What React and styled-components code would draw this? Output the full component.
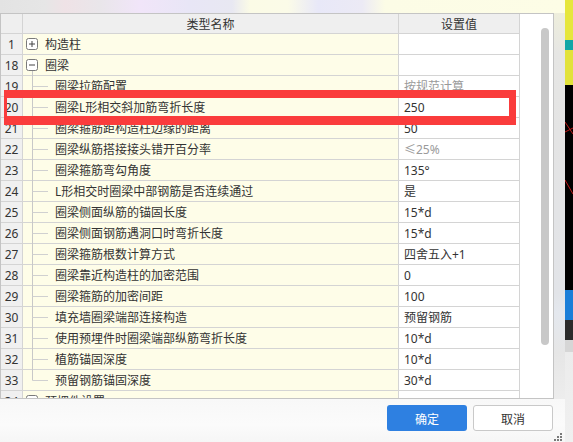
import React from "react";
import styled, { createGlobalStyle } from "styled-components";

const GlobalStyle = createGlobalStyle`
  html, body { margin: 0; padding: 0; }
  body {
    width: 573px;
    height: 442px;
    overflow: hidden;
    font-family: "Noto Sans", "Noto Sans CJK SC", sans-serif;
    color: #333;
  }
`;

const Page = styled.div`
  display: flex;
  width: 573px;
  height: 442px;
`;

const Dialog = styled.div`
  position: relative;
  width: 565px;
  display: flex;
  flex-direction: column;
  background: #fafafa;
`;

const TopBand = styled.div`
  height: 13px;
  background: linear-gradient(
    to right,
    #e3e3e3 0px,
    #e6e6e6 45px,
    #efe2e6 65px,
    #e9e6ea 100px,
    #f1e5f9 140px,
    #e8e6f6 190px,
    #e8e8f2 232px,
    #fbfbe6 250px,
    #fbfbe8 288px,
    #e8e8f8 318px,
    #eceaf5 362px,
    #fcfce6 385px,
    #fdfde6 565px
  );
`;

const Middle = styled.div`
  display: flex;
`;

const Gutter = styled.div`
  flex: 1;
  background: linear-gradient(
    to bottom,
    #eeeedc 0px,
    #e6e6e4 40px,
    #e4e4e4 120px,
    #e2e4e8 280px,
    #e4e8ee 300px,
    #e6e6e6 340px,
    #ededed 386px
  );
`;

const TableBox = styled.div`
  width: 554px;
  box-sizing: border-box;
  border: 1px solid #c4c4c4;
  display: flex;
  background: #fff;
  font-size: 12px;
`;

const Grid = styled.div`
  width: 519px;
  display: flex;
  flex-direction: column;
`;

const HeaderRow = styled.div`
  display: grid;
  grid-template-columns: 22px 376px 121px;
  height: 20px;
`;

const HeadCell = styled.div`
  box-sizing: border-box;
  background: #efefef;
  border-right: 1px solid #d4d4d4;
  border-bottom: 1px solid #d4d4d4;
  display: flex;
  align-items: center;
  justify-content: center;
  color: #333;
`;

const Body = styled.div`
  height: 364px;
  overflow: hidden;
`;

const Row = styled.div`
  display: grid;
  grid-template-columns: 22px 376px 121px;
  height: 21px;
`;

const NumCell = styled.div`
  box-sizing: border-box;
  background: #f0f0f0;
  border-right: 1px solid #d4d4d4;
  border-bottom: 1px solid #d4d4d4;
  display: flex;
  align-items: center;
  justify-content: center;
  color: #333;
`;

const NameCell = styled.div`
  box-sizing: border-box;
  background: #fefde8;
  border-right: 1px solid #d4d4d4;
  border-bottom: 1px solid #d4d4d4;
  display: flex;
  align-items: center;
  padding-left: 3px;
  gap: ${(p) => (p.$parent ? "7px" : "5px")};
  white-space: nowrap;
`;

const ValueCell = styled.div`
  box-sizing: border-box;
  background: #fff;
  border-right: 1px solid #d4d4d4;
  border-bottom: 1px solid #d4d4d4;
  display: flex;
  align-items: center;
  padding-left: 5px;
  color: ${(p) => (p.$muted ? "#9a9a9a" : "#333")};
  white-space: nowrap;
`;

const Track = styled.div`
  width: 33px;
  box-sizing: border-box;
  padding: 14px 0 0 21px;
  background: #fff;
`;

const Thumb = styled.div`
  width: 8px;
  height: 317px;
  border-radius: 4px;
  background: #c8c8c8;
`;

const Highlight = styled.div`
  position: absolute;
  left: 4px;
  top: 90px;
  width: 512px;
  height: 35px;
  box-sizing: border-box;
  border-style: solid;
  border-color: #fa3c3c;
  border-width: 8px 7px 9px 3px;
  pointer-events: none;
`;

const Footer = styled.div`
  position: relative;
  flex: 1;
  display: flex;
  justify-content: flex-end;
  align-items: flex-start;
  gap: 6px;
  padding: 6px 12px 0 0;
  background: linear-gradient(to bottom, #f8f8f8, #fbfbfb 60%, #f6f6f6);
`;

const Button = styled.button`
  width: 80px;
  height: 26px;
  border-radius: 3px;
  font-family: "Noto Sans CJK SC", sans-serif;
  font-size: 12px;
  padding: 0;
  box-sizing: border-box;
  cursor: pointer;
  border: ${(p) => (p.$primary ? "none" : "1px solid #c9c9c9")};
  background: ${(p) => (p.$primary ? "#2e80e1" : "#fff")};
  color: ${(p) => (p.$primary ? "#fff" : "#333")};
`;

const Grip = styled.svg`
  position: absolute;
  right: 3px;
  bottom: 1px;
`;

const OuterStrip = styled.div`
  width: 8px;
  position: relative;
  background: linear-gradient(
    to bottom,
    #e6e63c 0px,
    #e6e63c 40px,
    #12a6a6 40px,
    #12a6a6 50px,
    #e2e23a 50px,
    #e2e23a 85px,
    #000 85px,
    #000 290px,
    #1a7ed8 290px,
    #1a7ed8 320px,
    #2b2b2b 320px,
    #2b2b2b 340px,
    #d6d6d6 340px,
    #d6d6d6 352px,
    #ececec 352px,
    #f0f0f0 442px
  );
`;

const StripMarks = styled.svg`
  position: absolute;
  left: 0;
  top: 0;
`;

const Text = styled.span``;

function ExpandBox({ open }) {
  return (
    <svg width="12" height="12" viewBox="0 0 12 12">
      <rect x="0.5" y="0.5" width="11" height="11" rx="2" fill="#fff" stroke="#7a7a7a" />
      <line x1="3" y1="6" x2="9" y2="6" stroke="#444" />
      {!open && <line x1="6" y1="3" x2="6" y2="9" stroke="#444" />}
    </svg>
  );
}

function ParentGuide({ open }) {
  return (
    <svg width="12" height="20" viewBox="0 0 12 20" style={{ overflow: "visible" }}>
      {open && <line x1="6.5" y1="16" x2="6.5" y2="21" stroke="#c8c8c8" />}
      <g transform="translate(0,4)">
        <ExpandBox open={open} />
      </g>
    </svg>
  );
}

function ChildGuide({ last }) {
  return (
    <svg width="24" height="20" viewBox="0 0 24 20" style={{ overflow: "visible" }}>
      <line x1="6.5" y1="-1" x2="6.5" y2={last ? 10.5 : 21} stroke="#c8c8c8" />
      <line x1="6.5" y1="10.5" x2="22" y2="10.5" stroke="#d0d0d0" />
    </svg>
  );
}

const rows = [
  { n: 1, parent: true, open: false, name: "构造柱", value: "" },
  { n: 18, parent: true, open: true, name: "圈梁", value: "" },
  { n: 19, name: "圈梁拉筋配置", value: "按规范计算", muted: true },
  { n: 20, name: "圈梁L形相交斜加筋弯折长度", value: "250" },
  { n: 21, name: "圈梁箍筋距构造柱边缘的距离", value: "50" },
  { n: 22, name: "圈梁纵筋搭接接头错开百分率", value: "≤25%", muted: true },
  { n: 23, name: "圈梁箍筋弯勾角度", value: "135°" },
  { n: 24, name: "L形相交时圈梁中部钢筋是否连续通过", value: "是" },
  { n: 25, name: "圈梁侧面纵筋的锚固长度", value: "15*d" },
  { n: 26, name: "圈梁侧面钢筋遇洞口时弯折长度", value: "15*d" },
  { n: 27, name: "圈梁箍筋根数计算方式", value: "四舍五入+1" },
  { n: 28, name: "圈梁靠近构造柱的加密范围", value: "0" },
  { n: 29, name: "圈梁箍筋的加密间距", value: "100" },
  { n: 30, name: "填充墙圈梁端部连接构造", value: "预留钢筋" },
  { n: 31, name: "使用预埋件时圈梁端部纵筋弯折长度", value: "10*d" },
  { n: 32, name: "植筋锚固深度", value: "10*d" },
  { n: 33, name: "预留钢筋锚固深度", value: "30*d", last: true },
  { n: 34, parent: true, open: false, name: "预埋件设置", value: "" },
];

export default function App() {
  return (
    <>
      <GlobalStyle />
      <Page>
        <Dialog>
          <TopBand />
          <Middle>
            <TableBox>
              <Grid>
                <HeaderRow>
                  <HeadCell />
                  <HeadCell>类型名称</HeadCell>
                  <HeadCell>设置值</HeadCell>
                </HeaderRow>
                <Body>
                  {rows.map((r) => (
                    <Row key={r.n}>
                      <NumCell>{r.n}</NumCell>
                      <NameCell $parent={r.parent}>
                        {r.parent ? <ParentGuide open={r.open} /> : <ChildGuide last={r.last} />}
                        <Text>{r.name}</Text>
                      </NameCell>
                      <ValueCell $muted={r.muted}>{r.value}</ValueCell>
                    </Row>
                  ))}
                </Body>
              </Grid>
              <Track>
                <Thumb />
              </Track>
            </TableBox>
            <Gutter />
          </Middle>
          <Footer>
            <Button $primary>确定</Button>
            <Button>取消</Button>
            <Grip width="8" height="8" viewBox="0 0 8 8">
              <rect x="6" y="0" width="2" height="2" fill="#7a7a7a" />
              <rect x="3" y="3" width="2" height="2" fill="#7a7a7a" />
              <rect x="6" y="3" width="2" height="2" fill="#7a7a7a" />
              <rect x="0" y="6" width="2" height="2" fill="#7a7a7a" />
              <rect x="3" y="6" width="2" height="2" fill="#7a7a7a" />
              <rect x="6" y="6" width="2" height="2" fill="#7a7a7a" />
            </Grip>
          </Footer>
          <Highlight />
        </Dialog>
        <OuterStrip>
          <StripMarks width="8" height="442" viewBox="0 0 8 442">
            <line x1="0" y1="122" x2="8" y2="134" stroke="#c01818" />
            <line x1="0" y1="132" x2="8" y2="128" stroke="#c01818" />
            <line x1="0" y1="180" x2="8" y2="194" stroke="#c01818" />
          </StripMarks>
        </OuterStrip>
      </Page>
    </>
  );
}
